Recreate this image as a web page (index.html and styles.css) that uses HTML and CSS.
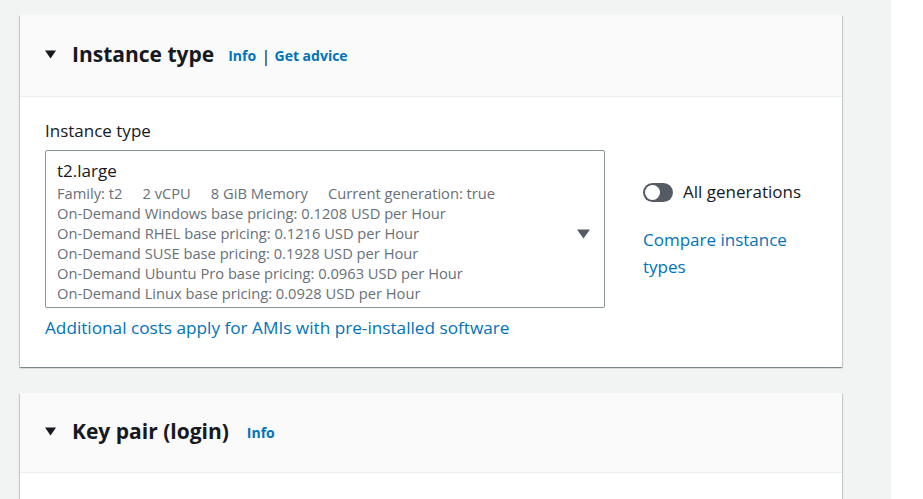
FILE: index.html
```html
<!DOCTYPE html>
<html>
<head>
<meta charset="utf-8">
<link rel="stylesheet" href="styles.css">
</head>
<body>
<div class="page">
  <div class="main">
    <section class="card">
      <header class="card-header">
        <svg class="caret" width="11" height="9" viewBox="0 0 11 9"><polygon points="0,0.5 11,0.5 5.5,8.5" fill="#16191f"/></svg>
        <h2 class="title">Instance type</h2>
        <span class="meta"><a class="info">Info</a><span class="sep">|</span><a class="info">Get advice</a></span>
      </header>
      <div class="card-body">
        <div class="label">Instance type</div>
        <div class="row">
          <div class="select">
            <div class="sel-main">
              <div class="sel-name">t2.large</div>
              <div class="sel-line"><span class="tag">Family: t2</span><span class="tag">2 vCPU</span><span class="tag">8 GiB Memory</span><span>Current generation: true</span></div>
              <div class="sel-line">On-Demand Windows base pricing: 0.1208 USD per Hour</div>
              <div class="sel-line">On-Demand RHEL base pricing: 0.1216 USD per Hour</div>
              <div class="sel-line">On-Demand SUSE base pricing: 0.1928 USD per Hour</div>
              <div class="sel-line">On-Demand Ubuntu Pro base pricing: 0.0963 USD per Hour</div>
              <div class="sel-line">On-Demand Linux base pricing: 0.0928 USD per Hour</div>
            </div>
            <svg class="sel-caret" width="13" height="10" viewBox="0 0 13 10"><polygon points="0,0.5 13,0.5 6.5,9.5" fill="#545b64"/></svg>
          </div>
          <div class="side-col">
            <div class="toggle-row">
              <span class="toggle"><span class="knob"></span></span>
              <span class="toggle-label">All generations</span>
            </div>
            <a class="compare">Compare instance types</a>
          </div>
        </div>
        <a class="costs">Additional costs apply for AMIs with pre-installed software</a>
      </div>
    </section>
    <section class="card card2">
      <header class="card-header card-header2">
        <svg class="caret" width="11" height="9" viewBox="0 0 11 9"><polygon points="0,0.5 11,0.5 5.5,8.5" fill="#16191f"/></svg>
        <h2 class="title">Key pair (login)</h2>
        <span class="meta meta2"><a class="info">Info</a></span>
      </header>
      <div class="card-body card-body2"></div>
    </section>
  </div>
  <div class="rightstrip"></div>
</div>
</body>
</html>
```

FILE: styles.css
```css
* { box-sizing: border-box; }
html, body { margin: 0; padding: 0; }
body {
  font-family: "Open Sans", "Noto Sans", sans-serif;
  color: #16191f;
  width: 923px;
  height: 499px;
  overflow: hidden;
}
.page {
  display: flex;
  height: 499px;
  overflow: hidden;
}
.main {
  width: 891px;
  flex: none;
  background: #f2f3f3;
  padding: 15px 49px 0 20px;
  display: flex;
  flex-direction: column;
  gap: 26px;
}
.rightstrip {
  flex: 1;
  background: #ffffff;
}
.card {
  background: #ffffff;
  flex: none;
  box-shadow: 0 1px 1px 0 rgba(0,28,36,.3), 1px 1px 1px 0 rgba(0,28,36,.15), -1px 1px 1px 0 rgba(0,28,36,.15);
}
.card-header {
  background: #fafafa;
  border-bottom: 1px solid #eaeded;
  height: 82px;
  padding: 0 25px 3px;
  display: flex;
  align-items: center;
}
.card-header2 { height: 80px; padding-bottom: 3px; }
.caret { flex: none; margin-right: 16px; margin-top: 1px; }
.title {
  margin: 0;
  font-size: 21px;
  font-weight: 700;
  line-height: 28px;
}
.meta {
  margin-left: 14px;
  font-size: 14px;
  font-weight: 700;
  display: flex;
  align-items: center;
  margin-top: 3px;
}
.meta2 { margin-left: 18px; }
.info { color: #0073bb; }
.sep { color: #16191f; margin: 0 4px 0 5px; font-weight: 400; font-size: 17px; }
.card-body {
  padding: 23px 25px 28px;
}
.card-body2 { height: 40px; }
.label {
  font-size: 17px;
  line-height: 22px;
}
.row {
  margin-top: 8px;
  display: flex;
  gap: 38px;
}
.select {
  flex: none;
  width: 560px;
  height: 158px;
  border: 1px solid #879596;
  border-radius: 2px;
  padding: 8px 14px 0 11px;
  display: flex;
  align-items: center;
}
.sel-main { flex: 1; align-self: flex-start; }
.sel-name { font-size: 17px; line-height: 24px; }
.sel-line { font-size: 14.7px; line-height: 20px; color: #687078; }
.tag { margin-right: 20px; }
.sel-caret { flex: none; margin-top: 2px; }
.side-col {
  flex: 1;
  min-width: 0;
  padding-top: 31px;
}
.toggle-row {
  display: flex;
  align-items: center;
  height: 22px;
}
.toggle {
  width: 30px;
  height: 19px;
  border-radius: 10px;
  background: #545b64;
  position: relative;
  flex: none;
}
.knob {
  position: absolute;
  left: 2px;
  top: 2px;
  width: 15px;
  height: 15px;
  border-radius: 50%;
  background: #ffffff;
}
.toggle-label {
  margin-left: 10px;
  font-size: 17px;
  line-height: 22px;
}
.compare {
  display: block;
  margin-top: 23px;
  color: #0073bb;
  font-size: 17px;
  line-height: 27px;
}
.costs {
  display: block;
  margin-top: 9px;
  color: #0073bb;
  font-size: 17.2px;
  line-height: 22px;
}
```
